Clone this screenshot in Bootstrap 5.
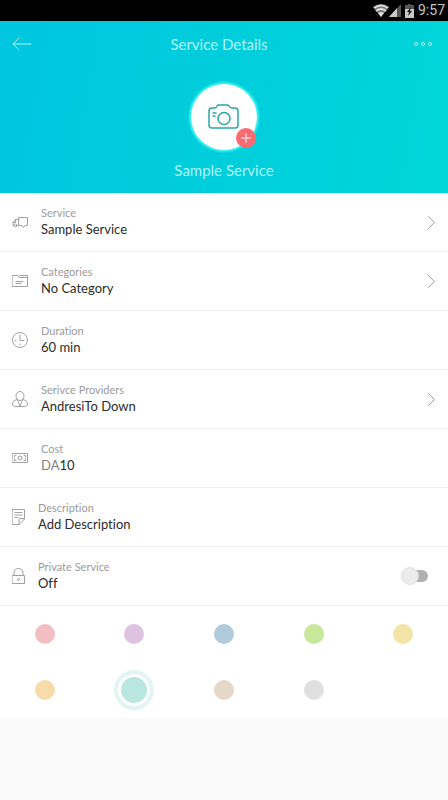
<!DOCTYPE html>
<html lang="en">
<head>
<meta charset="utf-8">
<meta name="viewport" content="width=device-width, initial-scale=1">
<title>Service Details</title>
<link href="https://cdn.jsdelivr.net/npm/bootstrap@5.3.0/dist/css/bootstrap.min.css" rel="stylesheet">
<style>
body { background: #fafafa; font-family: Lato, "Liberation Sans", sans-serif; font-variant-ligatures: none; color: #2b2b2b; }
svg { display: block; flex: none; }
.line-art { fill: none; stroke: currentColor; stroke-linecap: round; stroke-linejoin: round; }
.status { height: 21px; background: #000; color: #c4c4c4; font: 14px/21px Roboto, sans-serif; padding-right: 3px; }
.hero { background: linear-gradient(100deg, #00c6e0, #00d6d8); color: #b0f5f8; padding-bottom: 11px; }
.topbar { height: 46px; padding: 0 12px; }
.topbar h1, .hero-name { font-size: 15px; line-height: 24px; font-weight: 400; margin: 0; }
.plain { background: none; border: 0; padding: 0; color: inherit; }
.photo { width: 66px; height: 66px; border-radius: 50%; background: #fff; color: #2aa7a7; margin: 17px auto 8px; box-shadow: 0 0 2px 2px #3df3f5; }
.plus { right: 1px; bottom: 2px; width: 20px; height: 20px; border-radius: 50%; background: #f96b70; color: #fff; }
.entry { min-height: 59px; padding: 0 12px; gap: 12px; background: #fff; border: 0; border-bottom: 1px solid #eceeef; color: #a0a0a0; text-decoration: none; text-align: left; }
.words { padding: 0 0 2px 1px; }
.caption { font-size: 11px; line-height: 16px; color: #9b9b9b; }
.value { font-size: 13px; line-height: 16px; color: #2b2b2b; }
.unit { color: #808080; }
.toggle { appearance: none; width: 26px; height: 12px; border-radius: 6px; background: #b0b0b0; margin: 0 8px 0 0; position: relative; }
.toggle::before { content: ""; position: absolute; left: 0; top: -2px; width: 16px; height: 16px; border-radius: 50%; background: #ececec; box-shadow: 0 0 1px 1px #dedede; }
.toggle:checked::before { left: 12px; }
.palette { background: #fff; }
.palette label { height: 56px; }
.swatch { appearance: none; width: 20px; height: 20px; border-radius: 50%; background: var(--tone); margin: 0; }
.swatch:checked { width: 26px; height: 26px; box-shadow: 0 0 0 3px #fff, 0 0 0 7px #e2f5f2; }
.rose { --tone: #f1bfc1; } .lilac { --tone: #dec3e0; } .blue { --tone: #b1cbdd; }
.green { --tone: #c7e79a; } .yellow { --tone: #f3e5a8; } .orange { --tone: #f8dbab; }
.mint { --tone: #b9e6e1; } .sand { --tone: #e5d8c8; } .gray { --tone: #e0e0e1; }
</style>
</head>
<body>
<div class="status d-flex justify-content-end align-items-center">
  <svg width="16" height="13" viewBox="0 0 16 13"><path fill="#777" d="M0 3Q8-3 16 3L8 13Z"/><path fill="none" stroke="#ddd" stroke-width="2" d="M1 4Q8-1 15 4M3 7Q8 3 13 7"/><path fill="#ddd" d="M5 9Q8 7 11 9L8 13Z"/></svg>
  <svg width="12" height="13" viewBox="0 0 12 13"><path fill="#555" d="M12 0V13H0Z"/><path fill="#c8c8c8" d="M8 4V13H0Z"/></svg>
  <svg class="mx-1" width="9" height="14" viewBox="0 0 9 14"><path fill="#555" d="M3 0H6V1H9V6H0V1H3Z"/><path fill="#c8c8c8" d="M0 5H9V14H0Z"/><path fill="#111" d="M6 3L2 8H4L3 12L7 7H5Z"/></svg>
  <span>9:57</span>
</div>
<header class="hero">
  <div class="topbar d-flex align-items-center justify-content-between">
    <button class="plain" type="button" aria-label="Back"><svg class="line-art" width="20" height="14" viewBox="0 0 20 14"><path d="M19 7H1M7 1L1 7L7 13"/></svg></button>
    <h1>Service Details</h1>
    <button class="plain ps-2" type="button" aria-label="More options"><svg class="line-art me-1" width="18" height="6" viewBox="0 0 18 6"><circle cx="2" cy="3" r="1.6"/><circle cx="9" cy="3" r="1.6"/><circle cx="16" cy="3" r="1.6"/></svg></button>
  </div>
  <button class="plain photo position-relative d-flex align-items-center justify-content-center" type="button" aria-label="Add photo">
    <svg class="line-art" width="32" height="26" viewBox="0 0 32 26" stroke-width="1.5"><path d="M4 4H7Q8 4 9 2Q9.500 1 11 1H19Q20.500 1 21 2Q22 4 24 4H27Q30 4 30 7V21Q30 24 27 24H4Q1 24 1 21V7Q1 4 4 4Z"/><circle cx="16" cy="14.500" r="6"/><path d="M5 9H8M5 12H7"/></svg>
    <span class="plus position-absolute d-flex align-items-center justify-content-center"><svg class="line-art" width="10" height="10" viewBox="0 0 10 10"><path d="M5 0V10M0 5H10"/></svg></span>
  </button>
  <div class="hero-name text-center">Sample Service</div>
</header>
<main>
  <a class="entry d-flex align-items-center" href="#service">
    <svg class="line-art" width="16" height="14" viewBox="0 0 16 14"><path d="M7 2.500H15.500V10.500H13L11.500 12.500L10 10.500H7ZM7 4.500H3.500L1 7.500V10.500H2M3.500 4.500V7.500H1M5 10.500H7"/><circle cx="3.500" cy="10.500" r="1.500"/></svg>
    <span class="words flex-grow-1"><span class="caption d-block">Service</span><span class="value d-block">Sample Service</span></span>
    <svg class="line-art" width="9" height="13" viewBox="0 0 9 13"><path d="M1.500 .5L7.500 6.500L1.500 12.500"/></svg>
  </a>
  <a class="entry d-flex align-items-center" href="#categories">
    <svg class="line-art" width="16" height="14" viewBox="0 0 16 14"><path d="M.5 1.500H6L7 3.500H15.500V12.500H.5ZM8 1.500H15.500V3.500M4 7.500H11M4 9.500H9"/></svg>
    <span class="words flex-grow-1"><span class="caption d-block">Categories</span><span class="value d-block">No Category</span></span>
    <svg class="line-art" width="9" height="13" viewBox="0 0 9 13"><path d="M1.500 .5L7.500 6.500L1.500 12.500"/></svg>
  </a>
  <div class="entry d-flex align-items-center">
    <svg class="line-art" width="16" height="16" viewBox="0 0 16 16"><circle cx="8" cy="8" r="7.500"/><path d="M8 3V8.500H12M8 12V13M3 8.500H4"/></svg>
    <span class="words flex-grow-1"><span class="caption d-block">Duration</span><span class="value d-block">60 min</span></span>
  </div>
  <a class="entry d-flex align-items-center" href="#providers">
    <svg class="line-art" width="16" height="16" viewBox="0 0 16 16"><path d="M8 .5C5.500 .5 4 2.500 4 5C4 7 5.500 9.500 8 9.500S12 7 12 5C12 2.500 10.500 .5 8 .5ZM5 8.500C2 9 .5 11 .5 13C.5 15 2 15.500 4 15.500H12C14 15.500 15.500 15 15.500 13C15.500 11 14 9 11 8.500M5.500 9L8 15L10.500 9"/></svg>
    <span class="words flex-grow-1"><span class="caption d-block">Serivce Providers</span><span class="value d-block">AndresiTo Down</span></span>
    <svg class="line-art" width="9" height="13" viewBox="0 0 9 13"><path d="M1.500 .5L7.500 6.500L1.500 12.500"/></svg>
  </a>
  <div class="entry d-flex align-items-center">
    <svg class="line-art" width="16" height="12" viewBox="0 0 16 12"><path d="M.5 1.500H15.500V10.500H.5ZM2.500 5V3.500H4M12 3.500H13.500V5M2.500 7V8.500H4M12 8.500H13.500V7"/><circle cx="8" cy="6" r="2"/></svg>
    <span class="words flex-grow-1"><span class="caption d-block">Cost</span><span class="value d-block"><span class="unit">DA</span>10</span></span>
  </div>
  <div class="entry d-flex align-items-center">
    <svg class="line-art" width="13" height="16" viewBox="0 0 13 16"><path d="M.5 .5H12.500V10L7 15.500H.5ZM12.500 9.500H8Q7 9.500 7 10.500V15.500M3 3.500H10M3 6H10M3 8.500H6"/></svg>
    <span class="words flex-grow-1"><span class="caption d-block">Description</span><span class="value d-block">Add Description</span></span>
  </div>
  <label class="entry d-flex align-items-center" for="private">
    <svg class="line-art" width="13" height="16" viewBox="0 0 13 16"><path d="M.5 7.500H12.500V15.500H.5ZM2 7.500V5C2 2 4 .5 6.500 .5S11 2 11 5V7.500"/><circle cx="6.500" cy="11.500" r="1"/></svg>
    <span class="words flex-grow-1"><span class="caption d-block">Private Service</span><span class="value d-block">Off</span></span>
    <input class="toggle" id="private" type="checkbox" role="switch">
  </label>
  <div class="palette row row-cols-5 g-0" role="radiogroup" aria-label="Service color">
    <label class="col d-flex align-items-center justify-content-center"><input class="swatch rose" type="radio" name="tone" aria-label="Rose"></label>
    <label class="col d-flex align-items-center justify-content-center"><input class="swatch lilac" type="radio" name="tone" aria-label="Lilac"></label>
    <label class="col d-flex align-items-center justify-content-center"><input class="swatch blue" type="radio" name="tone" aria-label="Blue"></label>
    <label class="col d-flex align-items-center justify-content-center"><input class="swatch green" type="radio" name="tone" aria-label="Green"></label>
    <label class="col d-flex align-items-center justify-content-center"><input class="swatch yellow" type="radio" name="tone" aria-label="Yellow"></label>
    <label class="col d-flex align-items-center justify-content-center"><input class="swatch orange" type="radio" name="tone" aria-label="Orange"></label>
    <label class="col d-flex align-items-center justify-content-center"><input class="swatch mint" type="radio" name="tone" aria-label="Mint" checked></label>
    <label class="col d-flex align-items-center justify-content-center"><input class="swatch sand" type="radio" name="tone" aria-label="Sand"></label>
    <label class="col d-flex align-items-center justify-content-center"><input class="swatch gray" type="radio" name="tone" aria-label="Gray"></label>
  </div>
</main>
<script src="https://cdn.jsdelivr.net/npm/bootstrap@5.3.0/dist/js/bootstrap.bundle.min.js"></script>
</body>
</html>
